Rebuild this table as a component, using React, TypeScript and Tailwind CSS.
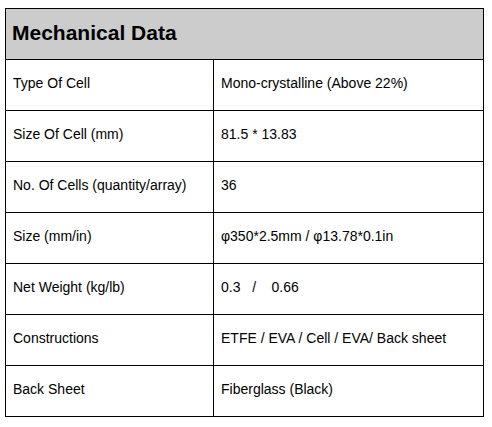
import React from 'react'

const rows = [
  ['Type Of Cell', 'Mono-crystalline (Above 22%)'],
  ['Size Of Cell (mm)', '81.5 * 13.83'],
  ['No. Of Cells (quantity/array)', '36'],
  ['Size (mm/in)', 'φ350*2.5mm / φ13.78*0.1in'],
  ['Net Weight (kg/lb)', '0.3\u00a0\u00a0\u00a0/\u00a0\u00a0\u00a0 0.66'],
  ['Constructions', 'ETFE / EVA / Cell / EVA/ Back sheet'],
  ['Back Sheet', 'Fiberglass (Black)'],
]

const App = () => {
  return (
    <div className="bg-white w-[492px] h-[427px] pt-[8px] pl-[5px]" style={{ fontFamily: '"Liberation Sans", Arial, sans-serif' }}>
      <div className="w-[479px] border border-black text-black">
        <div className="h-[50px] bg-[#cccccc] flex items-center pl-[6px] pb-[3px] text-[21px] font-bold">
          Mechanical Data
        </div>
        {rows.map(([label, value]) => (
          <div key={label} className="flex h-[51px] border-t border-black text-[14px]">
            <div className="w-[207px] flex items-center pl-[7px] pb-[3px]">{label}</div>
            <div className="flex-1 flex items-center pl-[7px] pb-[3px] border-l border-black">{value}</div>
          </div>
        ))}
      </div>
    </div>
  )
}

export default App
